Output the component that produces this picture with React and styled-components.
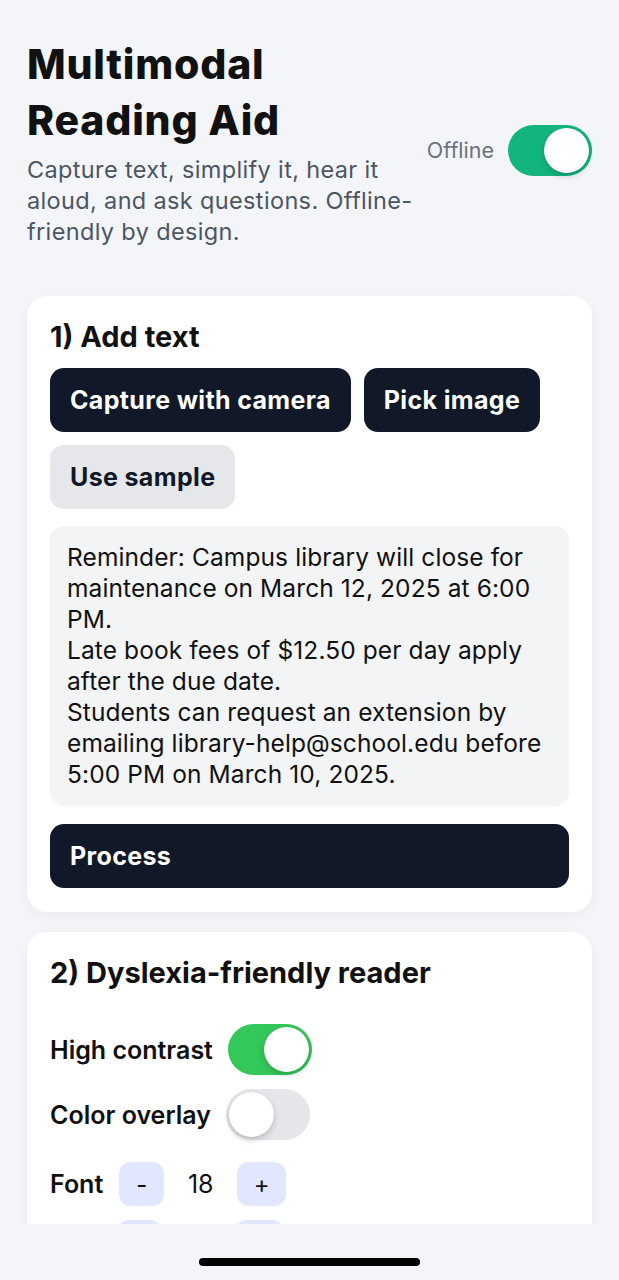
import { useState } from 'react';
import styled, { createGlobalStyle } from 'styled-components';

const GlobalStyle = createGlobalStyle`
  html, body {
    margin: 0;
    padding: 0;
    background: #f4f5f9;
  }
  body {
    font-family: Inter, 'Noto Sans', sans-serif;
    color: #111111;
    -webkit-font-smoothing: antialiased;
  }
  * { box-sizing: border-box; }
`;

const Page = styled.div`
  padding: 36px 27px 120px;
  display: flex;
  flex-direction: column;
  gap: 20px;
`;

const Header = styled.header`
  display: flex;
  align-items: center;
  justify-content: space-between;
  margin-bottom: 29px;
`;

const HeaderText = styled.div`
  width: 412px;
`;

const Title = styled.h1`
  margin: 0;
  font-size: 41px;
  line-height: 56px;
  font-weight: 800;
  letter-spacing: 0.8px;
  color: #111111;
`;

const Subtitle = styled.p`
  margin: 6px 0 0;
  font-size: 23.5px;
  line-height: 31px;
  letter-spacing: 0.35px;
  color: #4b5563;
`;

const OfflineBox = styled.div`
  display: flex;
  align-items: center;
  gap: 14px;
  padding-top: 17px;
`;

const OfflineLabel = styled.span`
  font-size: 21.5px;
  color: #6b7280;
`;

const Track = styled.button`
  position: relative;
  width: 84px;
  height: 51px;
  border: 0;
  padding: 0;
  border-radius: 26px;
  background: ${(p) => (p.$on ? p.$color : '#e5e5ea')};
  cursor: pointer;
  flex-shrink: 0;
`;

const Knob = styled.span`
  position: absolute;
  top: 3px;
  left: ${(p) => (p.$on ? '36px' : '3px')};
  width: 45px;
  height: 45px;
  border-radius: 50%;
  background: #ffffff;
  box-shadow: 0 3px 6px rgba(0, 0, 0, 0.18), 0 0 1px rgba(0, 0, 0, 0.1);
`;

const Card = styled.section`
  background: #ffffff;
  border-radius: 20px;
  padding: 24px 23px;
  box-shadow: 0 4px 14px rgba(15, 23, 42, 0.04);
`;

const CardTitle = styled.h2`
  margin: 0 0 ${(p) => p.$gap || 14}px;
  font-size: 29px;
  line-height: 34px;
  font-weight: 700;
  color: #111111;
`;

const ButtonWrap = styled.div`
  display: flex;
  flex-wrap: wrap;
  gap: 13px;
`;

const ActionButton = styled.button`
  height: 64px;
  padding: 0 20px;
  border: 0;
  border-radius: 14px;
  font-family: Inter, 'Noto Sans', sans-serif;
  font-size: 25px;
  font-weight: 700;
  letter-spacing: 0.35px;
  text-align: left;
  cursor: pointer;
  background: ${(p) => (p.$variant === 'light' ? '#e5e7eb' : '#111827')};
  color: ${(p) => (p.$variant === 'light' ? '#111827' : '#ffffff')};
  width: ${(p) => (p.$full ? '100%' : 'auto')};
`;

const TextBox = styled.div`
  margin: 17px 0 18px;
  padding: 16px 17px;
  background: #f3f4f6;
  border-radius: 14px;
  font-size: 24.5px;
  line-height: 31px;
  letter-spacing: 0.1px;
  color: #111111;
  white-space: pre-wrap;
`;

const Rows = styled.div`
  display: flex;
  flex-direction: column;
  gap: 14px;
`;

const Row = styled.div`
  display: flex;
  align-items: center;
  gap: ${(p) => (p.$step ? 16 : 15)}px;
  min-height: ${(p) => (p.$step ? 44 : 51)}px;
  margin-top: ${(p) => (p.$first ? '8px' : '0')};
`;

const RowLabel = styled.span`
  font-size: 25px;
  font-weight: 600;
  color: #111111;
`;

const StepButton = styled.button`
  width: ${(p) => p.$w || 46}px;
  height: 44px;
  border: 0;
  border-radius: 12px;
  background: #e0e7ff;
  font-family: Inter, 'Noto Sans', sans-serif;
  font-size: 24px;
  color: #111111;
  cursor: pointer;
`;

const StepValue = styled.span`
  min-width: 41px;
  text-align: center;
  font-size: 25px;
  color: #111111;
`;

const HomeBar = styled.div`
  position: fixed;
  left: 0;
  right: 0;
  bottom: 0;
  height: 56px;
  background: #f4f5f9;
  display: flex;
  justify-content: center;
  padding-top: 34px;
`;

const Indicator = styled.div`
  width: 221px;
  height: 8px;
  border-radius: 4px;
  background: #000000;
`;

const Toggle = ({ on, color, onClick }) => (
  <Track $on={on} $color={color} onClick={onClick}>
    <Knob $on={on} />
  </Track>
);

const sample =
  'Reminder: Campus library will close for maintenance on March 12, 2025 at 6:00 PM.\nLate book fees of $12.50 per day apply after the due date.\nStudents can request an extension by emailing library-help@school.edu before 5:00 PM on March 10, 2025.';

export default function App() {
  const [offline, setOffline] = useState(true);
  const [contrast, setContrast] = useState(true);
  const [overlay, setOverlay] = useState(false);
  const [font, setFont] = useState(18);
  const [spacing, setSpacing] = useState(1.5);

  return (
    <>
      <GlobalStyle />
      <Page>
        <Header>
          <HeaderText>
            <Title>Multimodal Reading Aid</Title>
            <Subtitle>
              Capture text, simplify it, hear it aloud, and ask questions. Offline-friendly by design.
            </Subtitle>
          </HeaderText>
          <OfflineBox>
            <OfflineLabel>Offline</OfflineLabel>
            <Toggle on={offline} color="#12b57c" onClick={() => setOffline(!offline)} />
          </OfflineBox>
        </Header>

        <Card>
          <CardTitle>1) Add text</CardTitle>
          <ButtonWrap>
            <ActionButton>Capture with camera</ActionButton>
            <ActionButton>Pick image</ActionButton>
            <ActionButton $variant="light">Use sample</ActionButton>
          </ButtonWrap>
          <TextBox>{sample}</TextBox>
          <ActionButton $full>Process</ActionButton>
        </Card>

        <Card>
          <CardTitle $gap={34}>2) Dyslexia-friendly reader</CardTitle>
          <Rows>
            <Row>
              <RowLabel>High contrast</RowLabel>
              <Toggle on={contrast} color="#34c759" onClick={() => setContrast(!contrast)} />
            </Row>
            <Row>
              <RowLabel>Color overlay</RowLabel>
              <Toggle on={overlay} color="#34c759" onClick={() => setOverlay(!overlay)} />
            </Row>
            <Row $step $first>
              <RowLabel>Font</RowLabel>
              <StepButton $w={45} onClick={() => setFont(font - 1)}>-</StepButton>
              <StepValue>{font}</StepValue>
              <StepButton $w={49} onClick={() => setFont(font + 1)}>+</StepButton>
            </Row>
            <Row $step>
              <RowLabel>Line</RowLabel>
              <StepButton $w={45} onClick={() => setSpacing(spacing - 0.1)}>-</StepButton>
              <StepValue>{spacing.toFixed(1)}</StepValue>
              <StepButton $w={49} onClick={() => setSpacing(spacing + 0.1)}>+</StepButton>
            </Row>
          </Rows>
        </Card>
      </Page>
      <HomeBar>
        <Indicator />
      </HomeBar>
    </>
  );
}
